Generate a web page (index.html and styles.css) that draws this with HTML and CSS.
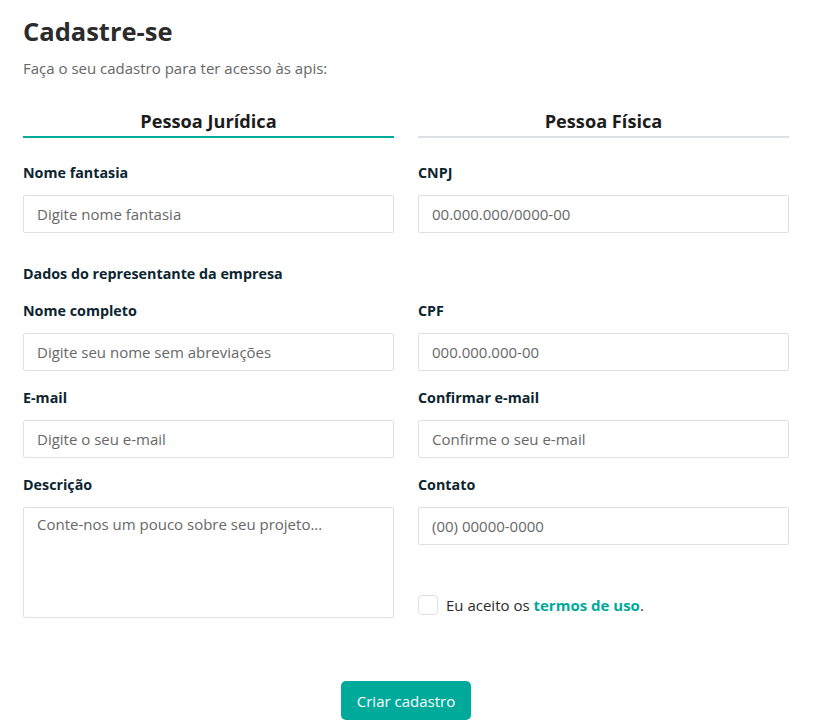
FILE: index.html
```html
<!DOCTYPE html>
<html lang="pt-BR">
<head>
    <meta charset="UTF-8">
    <meta name="viewport" content="width=device-width, initial-scale=1.0">
    <title>Cadastre-se</title>
    <link rel="stylesheet" href="styles.css">
</head>
<body>
    <div class="signup">
        <h1>Cadastre-se</h1>
        <p class="subtitle">Faça o seu cadastro para ter acesso às apis:</p>

        <div class="tabs">
            <div class="tab active">Pessoa Jurídica</div>
            <div class="tab">Pessoa Física</div>
        </div>

        <form class="form-grid">
            <div class="field">
                <label>Nome fantasia</label>
                <input type="text" placeholder="Digite nome fantasia">
            </div>
            <div class="field">
                <label>CNPJ</label>
                <input type="text" placeholder="00.000.000/0000-00">
            </div>

            <h3 class="section-title">Dados do representante da empresa</h3>

            <div class="field">
                <label>Nome completo</label>
                <input type="text" placeholder="Digite seu nome sem abreviações">
            </div>
            <div class="field">
                <label>CPF</label>
                <input type="text" placeholder="000.000.000-00">
            </div>

            <div class="field">
                <label>E-mail</label>
                <input type="email" placeholder="Digite o seu e-mail">
            </div>
            <div class="field">
                <label>Confirmar e-mail</label>
                <input type="email" placeholder="Confirme o seu e-mail">
            </div>

            <div class="field">
                <label>Descrição</label>
                <textarea placeholder="Conte-nos um pouco sobre seu projeto..."></textarea>
            </div>
            <div class="field">
                <label>Contato</label>
                <input type="text" placeholder="(00) 00000-0000">
                <div class="terms">
                    <span class="checkbox"></span>
                    <span>Eu aceito os <a href="#">termos de uso</a>.</span>
                </div>
            </div>

            <div class="actions">
                <button type="button" class="submit-button">Criar cadastro</button>
            </div>
        </form>
    </div>
</body>
</html>
```

FILE: styles.css
```css
:root {
    --primary-color: #00aa9b;
    --title-color: #2b2b2b;
    --label-color: #0c2530;
    --muted-color: #666666;
    --border-color: #dde1e6;
}

* {
    margin: 0;
    padding: 0;
    box-sizing: border-box;
}

body {
    font-family: 'Open Sans', 'Noto Sans', sans-serif;
    background: #ffffff;
    color: var(--title-color);
}

.signup {
    width: 766px;
    margin-left: 23px;
    padding-top: 14px;
}

h1 {
    font-size: 25.5px;
    line-height: 34px;
    font-weight: 700;
    color: var(--title-color);
}

.subtitle {
    margin-top: 10px;
    font-size: 15px;
    line-height: 20px;
    color: var(--muted-color);
}

.tabs {
    display: grid;
    grid-template-columns: 1fr 1fr;
    column-gap: 24px;
    margin-top: 30px;
}

.tab {
    text-align: center;
    font-size: 18.2px;
    line-height: 26px;
    font-weight: 700;
    color: #1c1c1c;
    padding-bottom: 2px;
    border-bottom: 2px solid var(--border-color);
}

.tab.active {
    border-bottom-color: var(--primary-color);
}

.form-grid {
    display: grid;
    grid-template-columns: 1fr 1fr;
    column-gap: 24px;
    row-gap: 17px;
    margin-top: 25px;
}

.field {
    display: flex;
    flex-direction: column;
}

.field label,
.section-title {
    font-size: 14.3px;
    line-height: 20px;
    font-weight: 700;
    color: var(--label-color);
}

.field label {
    margin-bottom: 12px;
}

.section-title {
    grid-column: 1 / -1;
    margin-top: 14px;
}

input,
textarea {
    font-family: inherit;
    font-size: 15px;
    color: var(--title-color);
    border: 1px solid var(--border-color);
    border-radius: 2px;
    padding: 0 13px;
    outline: none;
    background: #ffffff;
}

input {
    height: 38px;
}

textarea {
    height: 111px;
    padding-top: 6px;
    resize: none;
    line-height: 20px;
}

input::placeholder,
textarea::placeholder {
    color: #686868;
}

.terms {
    margin-top: auto;
    display: flex;
    align-items: center;
    gap: 8px;
    font-size: 15px;
    line-height: 22px;
    color: var(--title-color);
    padding-bottom: 2px;
}

.checkbox {
    width: 20px;
    height: 20px;
    border: 1px solid var(--border-color);
    border-radius: 4px;
}

.terms a {
    color: var(--primary-color);
    font-weight: 700;
    text-decoration: none;
}

.actions {
    grid-column: 1 / -1;
    display: flex;
    justify-content: center;
    margin-top: 46px;
}

.submit-button {
    font-family: inherit;
    background: var(--primary-color);
    color: #ffffff;
    border: none;
    border-radius: 5px;
    height: 39px;
    padding: 0 16px;
    font-size: 15px;
    cursor: pointer;
}
```
